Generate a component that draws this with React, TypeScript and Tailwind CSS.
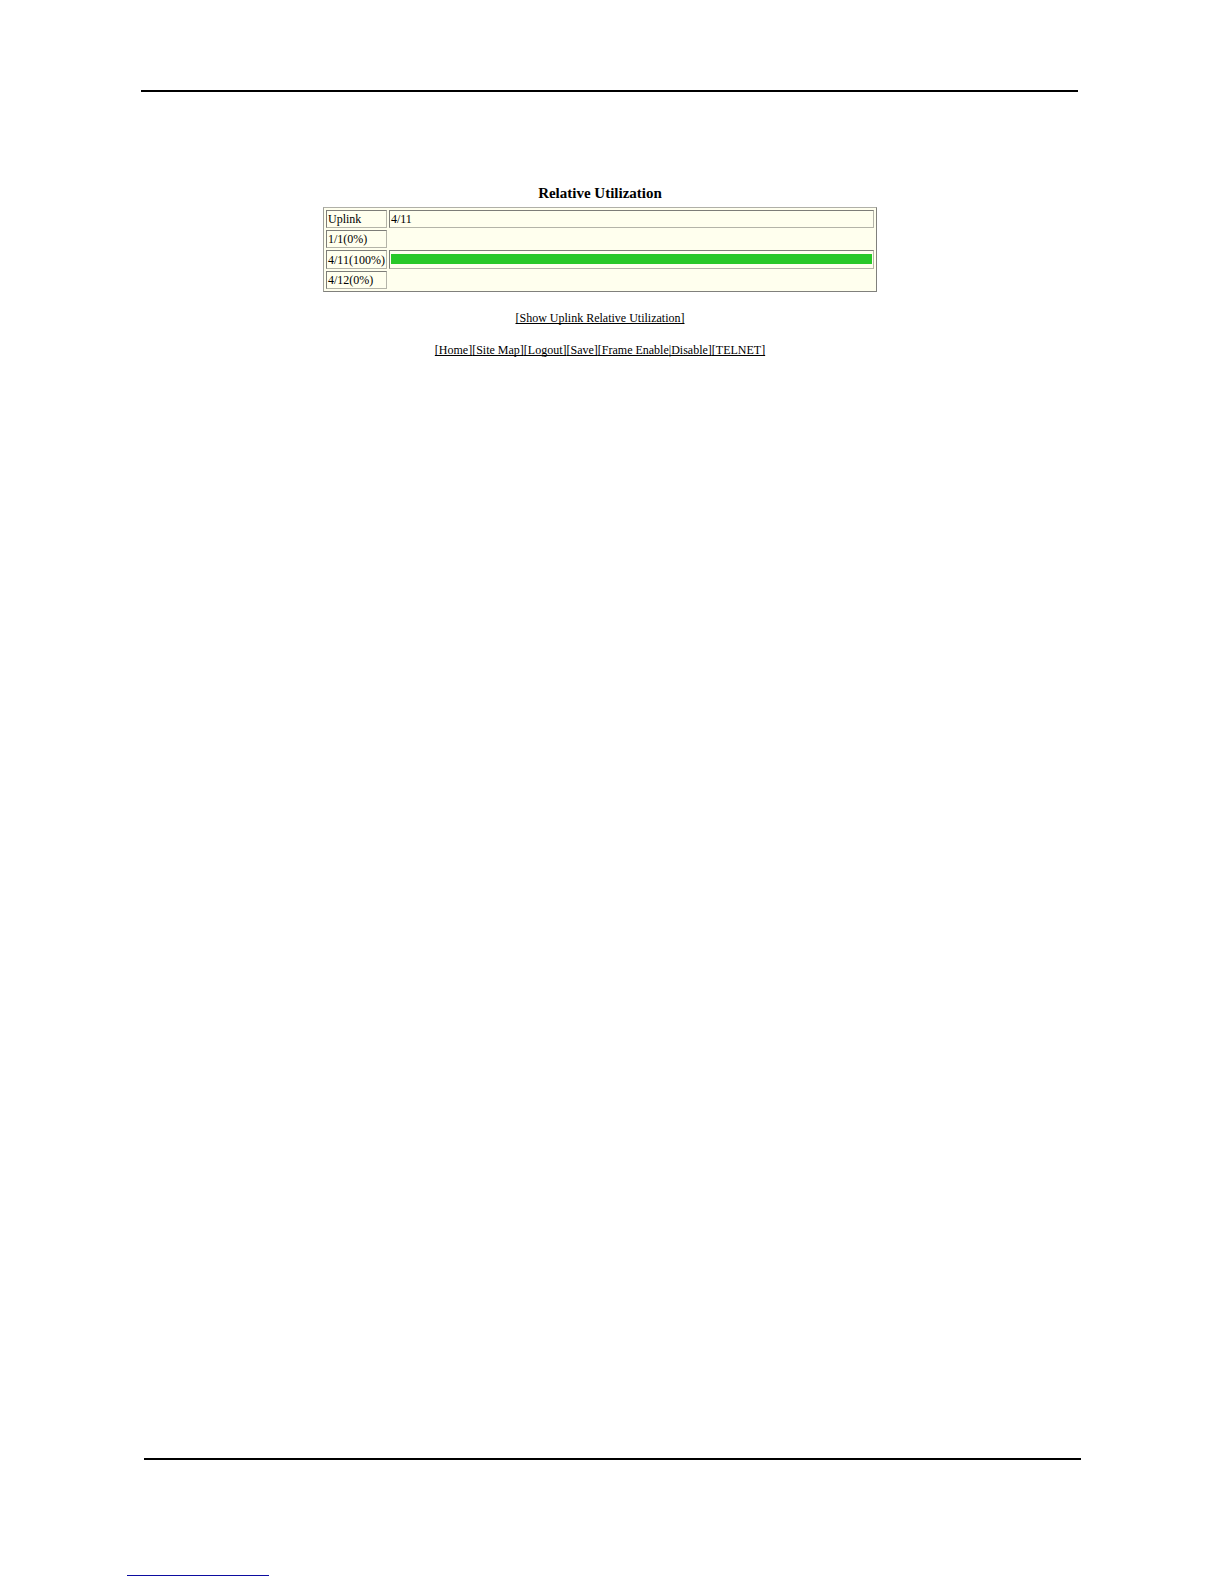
type Row = { label: string; text?: string; percent?: number };

const rows: Row[] = [
  { label: 'Uplink', text: '4/11' },
  { label: '1/1(0%)', percent: 0 },
  { label: '4/11(100%)', percent: 100 },
  { label: '4/12(0%)', percent: 0 },
];

const links = ['[Home]', '[Site Map]', '[Logout]', '[Save]', '[Frame Enable', '|Disable]', '[TELNET]'];

const cell =
  'border border-t-[#7d7d78] border-l-[#7d7d78] border-b-[#b4b4a8] border-r-[#b4b4a8] px-px py-0 text-left font-normal whitespace-nowrap';

const link = 'underline [text-decoration-skip-ink:none]';

function UtilizationRow({ label, text, percent = 0 }: Row) {
  const filled = text !== undefined || percent > 0;
  return (
    <tr className={percent > 0 ? 'h-[19px]' : 'h-[18px]'}>
      <th scope="row" className={cell}>
        {label}
      </th>
      <td className={filled ? `${cell} w-full` : 'w-full p-0'}>
        {text}
        {percent > 0 && (
          <div className="mb-px h-[10px] bg-[#28c828]" style={{ width: `${percent}%` }} />
        )}
      </td>
    </tr>
  );
}

export default function App() {
  return (
    <div className="flex min-h-screen flex-col bg-white font-['Liberation_Serif',serif] text-black">
      <hr className="mt-[90px] mr-[146px] ml-[141px] border-t-2 border-black" />
      <main className="flex flex-1 flex-col items-center pt-[93px] pr-6 text-xs leading-4">
        <h1 className="text-[15px] leading-4 font-bold">Relative Utilization</h1>
        <table
          aria-label="Relative Utilization"
          className="mt-1.5 w-full max-w-[554px] border-separate border-spacing-[2px] border border-t-[#b0b0a8] border-r-[#80807c] border-b-[#80807c] border-l-[#a0a09a] bg-[#ffffee]"
        >
          <tbody>
            {rows.map((row) => (
              <UtilizationRow key={row.label} {...row} />
            ))}
          </tbody>
        </table>
        <p className="mt-[18px]">
          <a href="#uplink" className={link}>
            [Show Uplink Relative Utilization]
          </a>
        </p>
        <nav className="mt-4 whitespace-nowrap">
          {links.map((label) => (
            <a key={label} href="#menu" className={link}>
              {label}
            </a>
          ))}
        </nav>
      </main>
      <hr className="mr-[143px] ml-[144px] border-t-2 border-black" />
      <footer className="mt-[115px] mb-2 ml-[127px]">
        <div className="h-px w-[142px] bg-[#0c0ca0]" />
      </footer>
    </div>
  );
}
